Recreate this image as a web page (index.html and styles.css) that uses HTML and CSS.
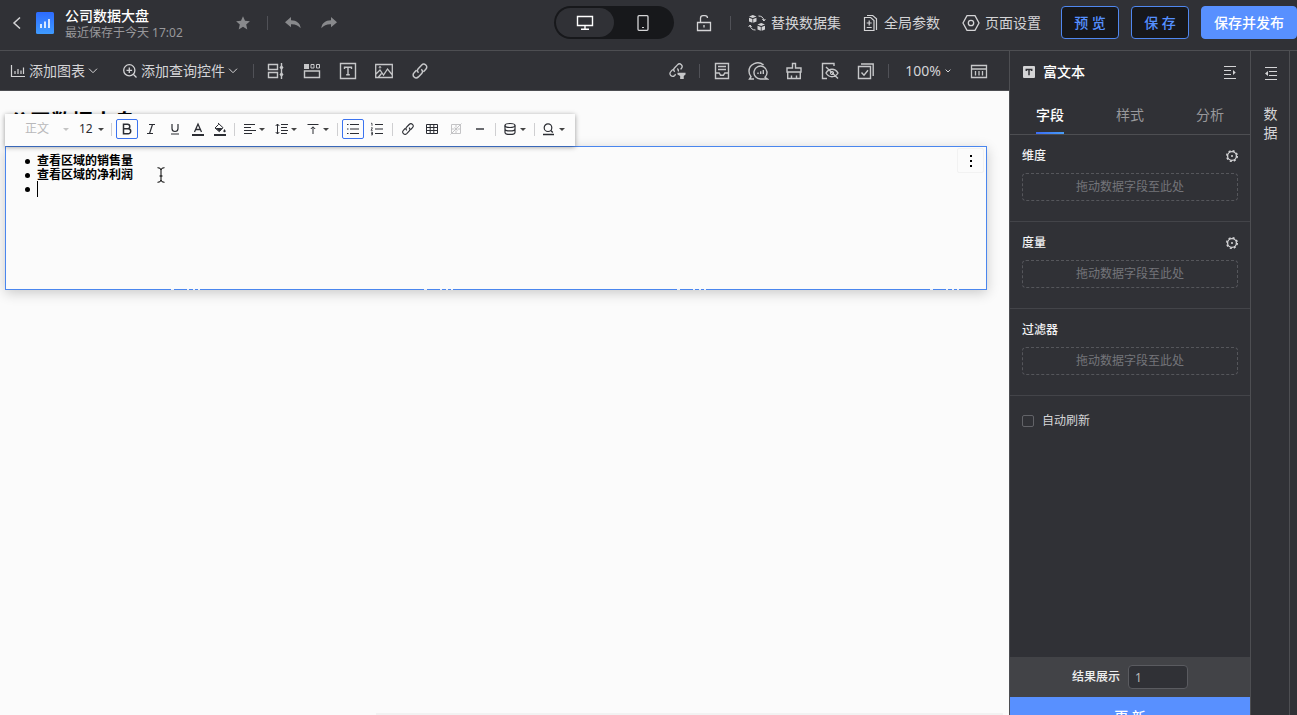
FILE: index.html
```html
<!DOCTYPE html>
<html lang="zh-CN">
<head>
  <meta charset="UTF-8" />
  <meta name="viewport" content="width=device-width, initial-scale=1.0"/>
  <title>公司数据大盘</title>
  <link rel="stylesheet" href="styles.css">
</head>
<body>
  <header class="header">
    <button class="icon-btn back" aria-label="返回">
      <svg width="10" height="14" viewBox="0 0 10 14"><path d="M8 1.500L2 7l6 5.500" stroke-width="1.500"/></svg>
    </button>
    <svg class="logo" width="18" height="22" viewBox="0 0 18 22">
      <defs><linearGradient id="logoBg" x1="0" y1="0" x2="0" y2="1"><stop offset="0" stop-color="#2d6bff"/><stop offset="1" stop-color="#3f9bff"/></linearGradient></defs>
      <rect width="18" height="22" rx="1.500" fill="url(#logoBg)" stroke="none"/>
      <path d="M5 12v4M9 9.500V16M13 7v9" stroke="#fff" stroke-width="1.600"/>
    </svg>
    <div class="doc">
      <div class="doc-title">公司数据大盘</div>
      <div class="doc-time">最近保存于今天 17:02</div>
    </div>
    <div class="history">
      <button class="icon-btn muted" aria-label="收藏">
        <svg width="16" height="16" viewBox="0 0 16 16"><path class="fill" d="M8 1.200l2 4.600 4.900.4-3.700 3.300 1.100 4.900L8 11.800l-4.300 2.600 1.100-4.900L1.100 6.200 6 5.800z"/></svg>
      </button>
      <span class="divider"></span>
      <button class="icon-btn muted" aria-label="撤销">
        <svg width="18" height="16" viewBox="0 0 18 16"><path class="fill" d="M7 2L1 7.300l6 5V9.200c4-.2 7 .8 9.700 4C16.200 8 12.600 5.400 7 5.200z"/></svg>
      </button>
      <button class="icon-btn muted" aria-label="重做">
        <svg width="18" height="16" viewBox="0 0 18 16"><path class="fill" d="M11 2l6 5.300-6 5V9.200c-4-.2-7 .8-9.700 4C1.800 8 5.400 5.400 11 5.200z"/></svg>
      </button>
    </div>
    <div class="header-right">
      <div class="device">
        <button class="device-btn active" aria-label="电脑">
          <svg width="18" height="16" viewBox="0 0 18 16"><path d="M1.500 1.500h15v9h-15zM9 10.500v3.500M5 14.300h8" stroke-width="1.400"/></svg>
        </button>
        <button class="device-btn" aria-label="手机">
          <svg width="12" height="16" viewBox="0 0 12 16"><rect x="1" y=".7" width="10" height="14.600" rx="1" stroke-width="1.300"/><path d="M5 12.500h2"/></svg>
        </button>
      </div>
      <button class="icon-btn lock" aria-label="解锁">
        <svg width="16" height="18" viewBox="0 0 16 18"><path d="M1.500 8.500h13v8h-13zM4.500 8.500V4.200q0-2.500 2.500-2.500h2q2.500 0 2.500 2.300M8 11v2.500" stroke-width="1.300"/></svg>
      </button>
      <span class="divider"></span>
      <button class="text-btn">
        <svg width="18" height="18" viewBox="0 0 18 18"><path class="fill" d="M1 2.500L4.800 1l3.700 1.500-3.700 1.400zM1 3.700l3.400 1.300v3.800L1 7.500zM8.500 3.700L5.200 5v3.800l3.300-1.300zM9.500 10.500l3.700-1.500 3.800 1.500-3.800 1.400zM9.500 11.700l3.300 1.300v3.800l-3.300-1.300zM17 11.700L13.600 13v3.800l3.400-1.300z"/><path d="M10.500 2c3 0 5 1.500 5.500 4.500M14.300 5.200L16 7l1.300-2M7.500 16c-3 0-4.800-1.500-5.500-4.500M.7 13L2 11l1.700 1.800"/></svg>
        替换数据集
      </button>
      <button class="text-btn">
        <svg width="16" height="18" viewBox="0 0 16 18"><path d="M1.500 3.500h6.200l3.300 3v10H1.500zM4 1.500h5.700l3.800 3.300V16M6.200 6.500v5M3.700 9h5M3.700 13.500h5" stroke-width="1.200"/></svg>
        全局参数
      </button>
      <button class="text-btn">
        <svg width="18" height="18" viewBox="0 0 18 18"><path d="M5 1.700h8L17 9l-4 7.300H5L1 9z" stroke-width="1.300"/><circle cx="9" cy="9" r="2.700" stroke-width="1.300"/></svg>
        页面设置
      </button>
      <div class="actions">
        <button class="btn">预 览</button>
        <button class="btn">保 存</button>
        <button class="btn primary">保存并发布</button>
      </div>
    </div>
  </header>

  <div class="workspace">
    <main class="main">
      <div class="toolbar">
        <button class="menu-btn">
          <svg width="16" height="16" viewBox="0 0 16 16"><path d="M1.500 2v11.500H15M5 11V8M8 11V6M11 11V7.500M13.500 11V4.500" stroke-width="1.200"/></svg>
          添加图表
          <svg class="chev" width="10" height="6" viewBox="0 0 10 6"><path d="M1 .7l4 4 4-4"/></svg>
        </button>
        <button class="menu-btn">
          <svg width="16" height="16" viewBox="0 0 16 16"><circle cx="7.300" cy="7.300" r="5.600" stroke-width="1.300"/><path d="M4.500 7.300h5.600M7.300 4.500v5.600M11.500 11.500l3 3" stroke-width="1.300"/></svg>
          添加查询控件
          <svg class="chev" width="10" height="6" viewBox="0 0 10 6"><path d="M1 .7l4 4 4-4"/></svg>
        </button>
        <span class="divider"></span>
        <button class="tool" aria-label="组合控件">
          <svg width="18" height="18" viewBox="0 0 18 18"><path d="M1.500 2.500h9v5h-9zM1.500 10.500h9v5h-9zM14.500 1v16" stroke-width="1.400"/><path class="fill" d="M14.500 3l2 2.500-2 2.500-2-2.500zM14.500 10l2 2.500-2 2.500-2-2.500z"/></svg>
        </button>
        <button class="tool" aria-label="标签页">
          <svg width="18" height="18" viewBox="0 0 18 18"><path class="fill" d="M1 2h5v5H1z"/><path d="M8 2.500h3v3.500H8zM13.500 2.500h3v3.500h-3z"/><path d="M1.500 9h15v6.500h-15z" stroke-width="1.400"/></svg>
        </button>
        <button class="tool" aria-label="富文本">
          <svg width="18" height="18" viewBox="0 0 18 18"><path d="M1.500 1.500h15v15h-15zM5.500 7V5.200h7V7M9 5.200v7.600M7.200 12.800h3.600" stroke-width="1.400"/></svg>
        </button>
        <button class="tool" aria-label="图片">
          <svg width="18" height="18" viewBox="0 0 18 18"><path d="M.7 2.500h16.600v13H.7zM1 12l4-4 3.500 5 4-6 4.500 5.500M3.500 15l3-3.500" stroke-width="1.300"/><circle cx="5" cy="5.300" r=".8"/></svg>
        </button>
        <button class="tool" aria-label="链接">
          <svg width="18" height="18" viewBox="0 0 18 18"><path d="M7.500 10.800C5.800 9.200 6 8 7.200 6.700l3.300-3.500c1.300-1.400 3-1.400 4.300-.2s1.300 3 0 4.300l-2.300 2.500M10.300 7.200c1.700 1.600 1.600 2.900.4 4.200l-3.300 3.500c-1.300 1.300-3 1.300-4.300.1s-1.300-3 0-4.300l2.300-2.500" stroke-width="1.500"/></svg>
        </button>
        <div class="toolbar-right">
          <button class="tool" aria-label="联动">
            <svg width="18" height="18" viewBox="0 0 20 20"><path d="M7.500 10.800C5.800 9.200 6 8 7.200 6.700l3.300-3.500c1.300-1.400 3-1.400 4.300-.2s1.300 3 0 4.300l-.8.900M10.300 7.200c1.300 1.200 1.500 2.300.9 3.300M8.500 13.700l-1.100 1.200c-1.300 1.300-3 1.300-4.300.1s-1.300-3 0-4.300l2.300-2.500" stroke-width="1.500"/><path class="fill" d="M10.500 12h9v2l-2 1.500V19h-4v-3.500l-3-1.500z"/></svg>
          </button>
          <span class="divider"></span>
          <button class="tool" aria-label="收纳">
            <svg width="18" height="18" viewBox="0 0 18 18"><path d="M2.500 1.500h13v15h-13zM5 4.500h8M5 7.500h8M2.500 11h3.700l1.300 2.200h3l1.300-2.200h3.700" stroke-width="1.400"/></svg>
          </button>
          <button class="tool" aria-label="图表评论">
            <svg width="22" height="20" viewBox="0 0 22 20"><path d="M16.500 4C11-.8 2 3 2 10.300c0 2.200.8 4 2 5.400L2.500 18H7" stroke-width="1.400"/><path d="M18 16.200A6.500 6.500 0 1 0 14 18h6.500zM11 13v-1.500M13.700 13v-2.700M16.300 13V9" stroke-width="1.400"/></svg>
          </button>
          <button class="tool" aria-label="清空">
            <svg width="18" height="18" viewBox="0 0 18 18"><path d="M7.500 6V1.500h3V6h5.500v4H2V6zM2.700 10v6.500h12.600V10M6.500 16.500v-3M11.500 16.500v-3" stroke-width="1.400"/></svg>
          </button>
          <button class="tool" aria-label="隐藏">
            <svg width="18" height="18" viewBox="0 0 18 18"><path d="M6 16.500H1.500v-15H13V4M5 11c3-5 9-5 12 0-3 5-9 5-12 0zM5 5l12 11.500" stroke-width="1.400"/><circle cx="11" cy="11" r="1.700"/></svg>
          </button>
          <button class="tool" aria-label="多选">
            <svg width="18" height="18" viewBox="0 0 18 18"><path d="M1.500 4.500h12v12h-12zM4 2h12.200v12M4.500 10.500l2.500 2.700 4-5" stroke-width="1.400"/></svg>
          </button>
          <span class="divider"></span>
          <button class="zoom">100%
            <svg class="chev" width="6" height="4" viewBox="0 0 6 4"><path d="M.6.600L3 3 5.400.600"/></svg>
          </button>
          <button class="tool" aria-label="布局">
            <svg width="18" height="18" viewBox="0 0 18 18"><path d="M1.500 3.500h15v12h-15zM1.500 7h15M5.500 9v4.500M9 9v4.500M12.500 9v4.500" stroke-width="1.300"/></svg>
          </button>
        </div>
      </div>

      <div class="canvas">
        <h1 class="page-title">公司数据大盘</h1>

        <div class="editbar">
          <label class="pick style-pick"><select aria-label="段落样式" disabled><option>正文</option></select></label>
          <label class="pick size-pick"><select aria-label="字号"><option>12</option></select></label>
          <span class="line"></span>
          <button class="fmt on" aria-label="加粗"><svg width="14" height="14" viewBox="0 0 14 14"><path d="M3.500 2.200h4a2.300 2.300 0 0 1 0 4.600h-4zM3.500 6.800h4.700a2.500 2.500 0 0 1 0 5H3.500z" stroke-width="1.500"/></svg></button>
          <button class="fmt" aria-label="斜体"><svg width="14" height="14" viewBox="0 0 14 14"><path d="M5 2.500h6M3 11.500h6M8.500 2.500l-3 9" stroke-width="1.200"/></svg></button>
          <button class="fmt" aria-label="下划线"><svg width="14" height="14" viewBox="0 0 14 14"><path d="M4 2v4.500a3 3 0 0 0 6 0V2M3 12h8" stroke-width="1.200"/></svg></button>
          <button class="fmt narrow" aria-label="字体颜色"><svg width="14" height="14" viewBox="0 0 14 14"><path d="M3.500 10L7 2l3.500 8M4.700 7.500h4.600" stroke-width="1.300"/><path d="M1 13h12" stroke-width="2"/></svg></button>
          <button class="fmt narrow" aria-label="背景颜色"><svg width="14" height="14" viewBox="0 0 14 14"><path d="M5 1l5 4.700-3.700 4L2 6l3.700-3.700"/><path class="fill" d="M2.500 6h7l-3.200 3.500zM11.500 7l1.200 2a1.200 1.200 0 1 1-2.400 0z"/><path d="M1 13h12" stroke-width="2"/></svg></button>
          <span class="line"></span>
          <button class="fmt drop" aria-label="对齐"><svg width="14" height="14" viewBox="0 0 14 14"><path d="M2 2.500h11M2 5.500h7M2 8.500h12M2 11.500h8"/></svg></button>
          <button class="fmt drop" aria-label="行高"><svg width="14" height="14" viewBox="0 0 14 14"><path d="M7 2.500h7M7 5.500h6M7 8.500h7M7 11.500h6M3.500 2v10M1.700 4l1.800-2 1.800 2M1.700 10l1.800 2 1.800-2"/></svg></button>
          <button class="fmt drop" aria-label="垂直对齐"><svg width="14" height="14" viewBox="0 0 14 14"><path d="M1.500 2.500h11M7 12V5M4.800 7L7 4.800 9.200 7"/></svg></button>
          <span class="line"></span>
          <button class="fmt on" aria-label="无序列表"><svg width="14" height="14" viewBox="0 0 14 14"><path d="M4 2.500h9M4 7h9M4 11.500h9M1 2.500h1.500M1 7h1.500M1 11.500h1.500" stroke-width="1.200"/></svg></button>
          <button class="fmt" aria-label="有序列表"><svg width="14" height="14" viewBox="0 0 14 14"><path d="M5 2.500h8M5 7h8M5 11.500h8" stroke-width="1.200"/><path d="M1 1.300h1v2.500M1 5.800h1.500L1 8.300h1.700M1 10.200h1.500v2.700H1M1 11.600h1.500" stroke-width=".8"/></svg></button>
          <span class="line"></span>
          <button class="fmt" aria-label="插入链接"><svg width="14" height="14" viewBox="0 0 18 18"><path d="M7.500 10.800C5.800 9.200 6 8 7.200 6.700l3.300-3.500c1.300-1.400 3-1.400 4.300-.2s1.300 3 0 4.300l-2.300 2.500M10.300 7.200c1.700 1.600 1.600 2.900.4 4.200l-3.300 3.500c-1.300 1.300-3 1.300-4.300.1s-1.300-3 0-4.300l2.300-2.500" stroke-width="1.500"/></svg></button>
          <button class="fmt" aria-label="表格"><svg width="14" height="14" viewBox="0 0 14 14"><path d="M1.500 2.500h11v9h-11zM1.500 5.500h11M1.500 8.500h11M5.200 2.500v9M8.800 2.500v9"/></svg></button>
          <button class="fmt" aria-label="合并单元格" disabled><svg width="14" height="14" viewBox="0 0 14 14"><path d="M2.500 2.500h9v9h-9zM2.500 7h3M8.500 7h3M7 2.500v3M7 8.500v3M1.500 12.500l11-11M5.500 5.500l3 3"/></svg></button>
          <button class="fmt" aria-label="分割线"><svg width="14" height="14" viewBox="0 0 14 14"><path d="M3 7h8" stroke-width="1.400"/></svg></button>
          <span class="line"></span>
          <button class="fmt drop" aria-label="数据"><svg width="14" height="14" viewBox="0 0 14 14"><ellipse cx="7" cy="3.500" rx="5" ry="2" stroke-width="1.200"/><path d="M2 3.500v7c0 2.600 10 2.600 10 0v-7M2 7c0 2.600 10 2.600 10 0" stroke-width="1.200"/></svg></button>
          <span class="line"></span>
          <button class="fmt drop" aria-label="查找"><svg width="14" height="14" viewBox="0 0 14 14"><circle cx="6" cy="5.700" r="3.800" stroke-width="1.200"/><path d="M8.800 8.500l2 2M1 12.500h11" stroke-width="1.300"/></svg></button>
        </div>

        <section class="widget">
          <ul class="rich-text">
            <li>查看区域的销售量</li>
            <li>查看区域的净利润</li>
            <li><span class="caret"></span></li>
          </ul>
          <button class="more" aria-label="更多"><svg width="4" height="14" viewBox="0 0 4 14"><path class="fill" d="M1 1h2v2H1zM1 6h2v2H1zM1 11h2v2H1z"/></svg></button>
          <svg class="pointer" width="10" height="16" viewBox="0 0 10 16"><path d="M1.500.700Q5 .7 5 3v10q0 2.300-3.500 2.300M8.500.700Q5 .7 5 3M5 13q0 2.300 3.500 2.300M3.500 9h3"/></svg>
        </section>
      </div>
    </main>

    <aside class="panel">
      <div class="panel-head">
        <svg width="12" height="12" viewBox="0 0 12 12"><rect width="12" height="12" rx="1" class="fill"/><path d="M3.300 5V3.400h5.400V5M6 3.400v5.800" stroke="#303136" stroke-width="1.500"/></svg>
        <h2>富文本</h2>
        <button class="icon-btn" aria-label="收起"><svg width="14" height="14" viewBox="0 0 14 14"><path d="M1 1.500h12M1 5.500h7M1 9.500h7M1 13.500h12" stroke-width="1.200"/><path class="fill" d="M10 5L12.700 7.500 10 10z"/></svg></button>
      </div>
      <nav class="tabs">
        <a class="tab active" href="#fields">字段</a>
        <a class="tab" href="#style">样式</a>
        <a class="tab" href="#analysis">分析</a>
      </nav>
      <div class="field">
        <div class="field-head"><h3>维度</h3>
          <button class="icon-btn" aria-label="维度设置"><svg width="12" height="12" viewBox="0 0 12 12"><circle cx="6" cy="6" r="4.400" stroke-width="1.300"/><circle cx="6" cy="6" r="5.300" stroke-width="1.400" stroke-dasharray="2.080 2.080"/><circle cx="6" cy="6" r="1" class="fill"/></svg></button>
        </div>
        <div class="drop-zone">拖动数据字段至此处</div>
      </div>
      <div class="field">
        <div class="field-head"><h3>度量</h3>
          <button class="icon-btn" aria-label="度量设置"><svg width="12" height="12" viewBox="0 0 12 12"><circle cx="6" cy="6" r="4.400" stroke-width="1.300"/><circle cx="6" cy="6" r="5.300" stroke-width="1.400" stroke-dasharray="2.080 2.080"/><circle cx="6" cy="6" r="1" class="fill"/></svg></button>
        </div>
        <div class="drop-zone">拖动数据字段至此处</div>
      </div>
      <div class="field">
        <div class="field-head"><h3>过滤器</h3></div>
        <div class="drop-zone">拖动数据字段至此处</div>
      </div>
      <label class="refresh"><input type="checkbox">自动刷新</label>
      <div class="panel-foot">
        <div class="result">
          <label for="rows">结果展示</label>
          <input type="text" id="rows" value="1">
        </div>
        <button class="update">更 新</button>
      </div>
    </aside>

    <aside class="rail">
      <button class="icon-btn" aria-label="展开"><svg width="14" height="14" viewBox="0 0 14 14"><path d="M1 1.500h12M5 5.500h8M5 9.500h8M1 13.500h12" stroke-width="1.200"/><path class="fill" d="M4 5L1 7.500 4 10z"/></svg></button>
      <span class="rail-text">数据</span>
    </aside>
    <div class="edge"></div>
  </div>
</body>
</html>
```

FILE: styles.css
```css
* {
  box-sizing: border-box;
}
body {
  margin: 0;
  height: 100vh;
  display: flex;
  flex-direction: column;
  overflow: hidden;
  background: #303136;
  color: #d4d4d6;
  font-family: "Noto Sans", "Noto Sans CJK SC", sans-serif;
  font-size: 14px;
  line-height: 20px;
}
button, input, select {
  font: inherit;
  color: inherit;
}
button {
  display: flex;
  align-items: center;
  justify-content: center;
  padding: 0;
  border: none;
  background: none;
  white-space: nowrap;
  cursor: pointer;
}
h1, h2, h3, ul {
  margin: 0;
  padding: 0;
}
svg {
  flex: none;
  fill: none;
  stroke: currentColor;
}
.fill {
  fill: currentColor;
  stroke: none;
}
.divider {
  width: 1px;
  height: 14px;
  background: #505157;
}

/* header */
.header {
  flex: none;
  height: 51px;
  display: flex;
  align-items: center;
  padding: 0 0 5px 12px;
  border-bottom: 1px solid #4d4e52;
}
.logo {
  margin: 0 11px 0 14px;
}
.doc {
  padding-top: 3px;
}
.doc-title {
  color: #fff;
  font-weight: 500;
  line-height: 18px;
}
.doc-time {
  color: #98989b;
  font-size: 12px;
  line-height: 16px;
}
.history {
  display: flex;
  align-items: center;
  gap: 16px;
  margin-left: 52px;
}
.history .icon-btn + .icon-btn {
  margin-left: 2px;
}
.muted {
  color: #88898c;
}
.header-right {
  display: flex;
  align-items: center;
  margin-left: auto;
}
.device {
  display: flex;
  padding: 2px;
  width: 120px;
  height: 33px;
  border-radius: 17px;
  background: #17181b;
}
.device-btn {
  flex: 1;
  border-radius: 15px;
}
.device-btn.active {
  background: #303136;
  color: #fff;
}
.lock {
  margin: 0 18px 0 22px;
}
.text-btn {
  gap: 5px;
  margin-left: 22px;
}
.divider + .text-btn {
  margin-left: 17px;
}
.actions {
  display: flex;
  gap: 12px;
  margin-left: 20px;
}
.btn {
  width: 58px;
  height: 33px;
  border: 1px solid #5088f0;
  border-radius: 4px;
  background: #17181b;
  color: #5590ff;
  font-weight: 500;
}
.btn.primary {
  width: 96px;
  border-color: #5890ff;
  background: #5890ff;
  color: #fff;
}

/* layout */
.workspace {
  flex: 1;
  min-height: 0;
  display: flex;
}
.main {
  flex: 1;
  min-width: 0;
  display: flex;
  flex-direction: column;
}
.toolbar {
  height: 40px;
  display: flex;
  align-items: center;
  padding-left: 10px;
  border-bottom: 1px solid #4d4e52;
}
.menu-btn {
  gap: 3px;
  margin-right: 24px;
}
.divider + .tool {
  margin-left: 4px;
}
.menu-btn + .divider {
  margin-left: -9px;
}
.tool {
  width: 36px;
  height: 32px;
  color: #c6c7c9;
}
.toolbar-right {
  display: flex;
  align-items: center;
  margin-left: auto;
  padding-right: 12px;
}
.tool + .divider {
  margin-left: 4px;
}
.zoom {
  gap: 4px;
  margin: 0 10px 0 16px;
}

/* canvas */
.canvas {
  flex: 1;
  min-height: 0;
  position: relative;
  padding: 15px 22px 0 5px;
  background: #fbfbfb;
  color: #000;
}
.canvas::after {
  content: "";
  position: absolute;
  left: 376px;
  right: 6px;
  bottom: 0;
  height: 2px;
  background: #f2f2f2;
}
.page-title {
  height: 40px;
  padding-left: 4px;
  font-size: 21px;
  font-weight: 700;
  line-height: 30px;
}
.editbar {
  position: absolute;
  z-index: 2;
  top: 23px;
  left: 5px;
  height: 32px;
  display: flex;
  align-items: center;
  padding: 0 5px 2px 0;
  background: #fcfcfc;
  color: #2b2d33;
  box-shadow: 0 1px 5px rgba(0,0,0,0.4);
}
.pick {
  display: flex;
  align-items: center;
  padding-right: 4px;
  font-size: 12px;
}
.pick select {
  flex: 1;
  min-width: 0;
  padding: 0;
  border: none;
  background: none;
  appearance: none;
}
.pick select:disabled {
  color: #b8b8ba;
  opacity: 1;
}
.pick::after, .drop::after {
  content: "";
  border: 3px solid transparent;
  border-top-color: #444;
  border-bottom: none;
}
.style-pick {
  width: 68px;
  padding-left: 20px;
}
.style-pick::after {
  border-top-color: #c4c4c4;
}
.size-pick {
  width: 35px;
  padding-left: 6px;
}
.line {
  width: 1px;
  height: 13px;
  margin: 0 3px;
  background: #cfcfd1;
}
.fmt {
  width: 24px;
  height: 20px;
}
.fmt.on {
  width: 22px;
  margin: 0 1px;
  border: 1px solid #3b73f0;
  border-radius: 2px;
}
.fmt.narrow {
  width: 22px;
}
.fmt.drop {
  width: 32px;
  gap: 3px;
  padding-left: 4px;
  justify-content: flex-start;
}
.fmt:disabled {
  color: #c4c4c6;
}
.widget {
  position: relative;
  height: 144px;
  padding: 7px 31px;
  border: 1px solid #4a86ee;
  background: #fbfbfb;
  box-shadow: 0 3px 12px rgba(0,0,0,0.2);
}
.widget::after {
  content: "";
  position: absolute;
  left: 165px;
  right: 0;
  bottom: -1px;
  height: 1px;
  background: repeating-linear-gradient(90deg, #e8eefa 0 3px, transparent 3px 16px, #e8eefa 16px 18px, transparent 18px 22px, #e8eefa 22px 24px, transparent 24px 27px, #e8eefa 27px 29px, transparent 29px 253px);
}
.rich-text {
  list-style: none;
  font-size: 12px;
  font-weight: 700;
  line-height: 14px;
}
.rich-text li {
  display: flex;
  align-items: center;
  height: 14px;
}
.rich-text li::before {
  content: "";
  width: 5px;
  height: 5px;
  margin: 0 7px 0 -12px;
  border-radius: 50%;
  background: #000;
}
.caret {
  width: 1px;
  height: 16px;
  background: #000;
}
.more {
  position: absolute;
  top: 1px;
  right: 2px;
  width: 27px;
  height: 25px;
  border: 1px solid #f2f2f2;
  border-radius: 2px;
}
.pointer {
  position: absolute;
  top: 20px;
  left: 150px;
}

/* settings panel */
.panel {
  width: 241px;
  display: flex;
  flex-direction: column;
  border-left: 1px solid #4d4e52;
}
.panel-head {
  height: 44px;
  display: flex;
  align-items: center;
  gap: 8px;
  padding: 0 13px 2px;
}
.panel-head h2 {
  color: #fff;
  font-size: 14px;
  font-weight: 500;
  line-height: 20px;
}
.panel-head .icon-btn {
  margin-left: auto;
}
.tabs {
  display: flex;
  height: 40px;
  border-bottom: 1px solid #4d4e52;
}
.tab {
  flex: 1;
  display: flex;
  justify-content: center;
  color: #98989b;
  line-height: 40px;
  text-decoration: none;
}
.tab.active {
  background: linear-gradient(90deg, #3b6cf5, #479cf7) center bottom / 28px 2px no-repeat;
  color: #fff;
  font-weight: 500;
}
.field {
  padding: 11px 12px 20px;
  border-bottom: 1px solid #434449;
}
.field-head {
  display: flex;
  align-items: center;
  justify-content: space-between;
  height: 20px;
  margin-bottom: 7px;
}
.field-head h3 {
  color: #f2f2f3;
  font-size: 12px;
  font-weight: 500;
}
.drop-zone {
  height: 28px;
  border: 1px dashed #55565b;
  border-radius: 4px;
  color: #74757a;
  font-size: 12px;
  line-height: 26px;
  text-align: center;
}
.refresh {
  display: flex;
  align-items: center;
  gap: 8px;
  padding: 15px 12px;
  font-size: 12px;
  line-height: 20px;
}
.refresh input {
  width: 12px;
  height: 12px;
  margin: 0;
  border: 1px solid #626368;
  border-radius: 2px;
  appearance: none;
}
/* the update button runs past the bottom edge */
.panel-foot {
  margin: auto 0 -22px;
}
.result {
  height: 40px;
  display: flex;
  align-items: center;
  justify-content: center;
  gap: 8px;
  background: #424347;
  color: #eee;
  font-size: 12px;
  font-weight: 500;
}
.result input {
  width: 60px;
  height: 24px;
  padding: 0 6px;
  border: 1px solid #5a5b60;
  border-radius: 4px;
  background: #303136;
  color: #bbb;
  font-weight: 400;
}
.update {
  width: 100%;
  height: 40px;
  background: #5890ff;
  color: #fff;
  font-weight: 500;
}
.rail {
  width: 39px;
  display: flex;
  flex-direction: column;
  align-items: center;
  gap: 24px;
  padding: 15px 0 0 1px;
  border-left: 1px solid #4d4e52;
}
.rail-text {
  width: 14px;
  line-height: 19px;
}
.edge {
  width: 8px;
  border-left: 1px solid #4d4e52;
}
```
